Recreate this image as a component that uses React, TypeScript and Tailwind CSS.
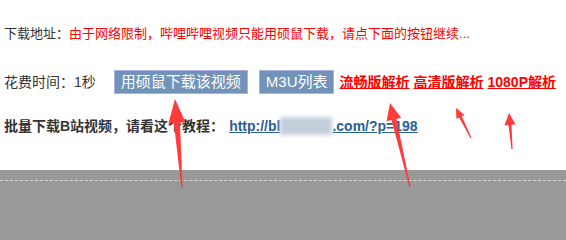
// App.tsx
import React from "react";

type Pt = [number, number];

// 把手画的红色箭头算成多边形
function arrowPoints(tip: Pt, tail: Pt, headLen: number, headW: number, shaftW: number) {
  const dx = tail[0] - tip[0];
  const dy = tail[1] - tip[1];
  const len = Math.hypot(dx, dy);
  const ux = dx / len, uy = dy / len;
  const nx = -uy, ny = ux;
  const bx = tip[0] + ux * headLen, by = tip[1] + uy * headLen;
  const pts: Pt[] = [
    tip,
    [bx + nx * headW / 2, by + ny * headW / 2],
    [bx + nx * shaftW / 2, by + ny * shaftW / 2],
    [tail[0] + nx * 0.6, tail[1] + ny * 0.6],
    [tail[0] - nx * 0.6, tail[1] - ny * 0.6],
    [bx - nx * shaftW / 2, by - ny * shaftW / 2],
    [bx - nx * headW / 2, by - ny * headW / 2],
  ];
  return pts.map((p) => `${p[0].toFixed(1)},${p[1].toFixed(1)}`).join(" ");
}

const arrows = [
  { tip: [175, 99] as Pt, tail: [182, 188] as Pt, head: 24, w: 17, s: 6 },
  { tip: [390, 103] as Pt, tail: [410, 187] as Pt, head: 17, w: 15, s: 5 },
  { tip: [456, 108] as Pt, tail: [471, 138] as Pt, head: 10, w: 9, s: 3 },
  { tip: [509, 113] as Pt, tail: [512, 149] as Pt, head: 12, w: 11, s: 3 },
];

export default function App() {
  return (
    <div className="relative w-[566px] h-[240px] overflow-hidden bg-white font-['Liberation_Sans','Noto_Sans_CJK_SC',sans-serif]">
      <div className="px-1">
        {/* 下载地址 */}
        <div className="pt-[25px] text-[13px] leading-[18px] text-[#333] whitespace-nowrap">
          下载地址：<span className="text-[#ff0000]">由于网络限制，哔哩哔哩视频只能用硕鼠下载，请点下面的按钮继续...</span>
        </div>

        {/* 按钮一排 */}
        <div className="mt-[27px] h-[24px] flex items-center text-[14px] text-[#333] whitespace-nowrap">
          <span>花费时间：1秒</span>
          <button className="ml-[18px] h-[24px] px-[6px] bg-[#7193b7] border border-[#aeb0e6] text-white text-[15px] leading-[22px]">
            用硕鼠下载该视频
          </button>
          <button className="ml-[11px] h-[24px] px-[6px] bg-[#7193b7] border border-[#aeb0e6] text-white text-[15px] leading-[22px]">
            M3U列表
          </button>
          <a className="ml-[5px] text-[#ff0000] font-bold underline text-[14px]">流畅版解析</a>
          <a className="ml-[4px] text-[#ff0000] font-bold underline text-[14px]">高清版解析</a>
          <a className="ml-[4px] text-[#ff0000] font-bold underline text-[14px]">1080P解析</a>
        </div>

        {/* 教程 */}
        <div className="mt-[22px] h-[20px] flex items-center text-[14px] font-bold text-[#333] whitespace-nowrap">
          <span>批量下载B站视频，请看这个教程：</span>
          <a className="ml-[5px] text-[#2a5f93] underline flex items-center">
            http://bl
            <span className="inline-block w-[52px] h-[18px] bg-[#c3cedb] blur-[2px]" />
            .com/?p=198
          </a>
        </div>
      </div>

      {/* 灰色底 */}
      <div className="mt-[34px] h-[70px] bg-[#999999] pt-[10px]">
        <div className="border-t border-dashed border-[#d8d8d8]" />
      </div>

      <svg className="absolute inset-0 pointer-events-none" width="566" height="240" viewBox="0 0 566 240">
        {arrows.map((a, i) => (
          <polygon key={i} points={arrowPoints(a.tip, a.tail, a.head, a.w, a.s)} fill="#ff3b3b" />
        ))}
      </svg>
    </div>
  );
}
